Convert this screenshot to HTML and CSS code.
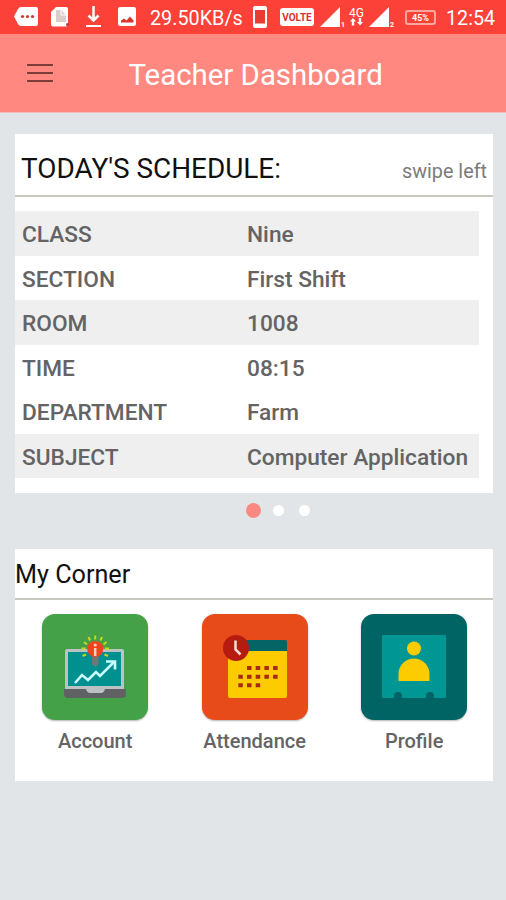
FILE: index.html
```html
<!DOCTYPE html>
<html lang="en">
<head>
  <meta charset="UTF-8">
  <meta name="viewport" content="width=device-width, initial-scale=1.0">
  <title>Teacher Dashboard</title>
  <link rel="stylesheet" href="styles.css">
</head>
<body>

<div class="status-bar">
  <svg class="icon-message" width="24" height="20" viewBox="0 0 24 20">
    <path d="M7 0h15a2 2 0 0 1 2 2v15a2 2 0 0 1-2 2H7Q5 19 4 17L0 9.500 4 2Q5 0 7 0z" fill="#fff"/>
    <g fill="#d8352b"><circle cx="8.500" cy="9.500" r="1.600"/><circle cx="13.500" cy="9.500" r="1.600"/><circle cx="18.500" cy="9.500" r="1.600"/></g>
  </svg>
  <svg class="icon-file" width="19" height="20" viewBox="0 0 19 20">
    <path d="M5 0h10a2 2 0 0 1 2 2v15.500a2 2 0 0 1-2 2H2a2 2 0 0 1-2-2V5z" fill="#fff"/>
    <path d="M5 3h5l5 5v7H5z" fill="#dccccb"/>
    <path d="M10 3v5h5" fill="none" stroke="#fff"/>
    <circle cx="16.500" cy="17.500" r="1.500" fill="#c8372f"/>
  </svg>
  <svg class="icon-download" width="17" height="22" viewBox="0 0 17 22">
    <path d="M8.500 0v14M3.500 9.500l5 5 5-5" fill="none" stroke="#fff" stroke-width="2.500"/>
    <path d="M1 20h15" stroke="#fff" stroke-width="2"/>
  </svg>
  <svg class="icon-image" width="19" height="20" viewBox="0 0 19 20">
    <rect width="18" height="19" rx="2" fill="#fff"/>
    <path d="M3 15.500v-2l3-2 2.500 2 3.500-4 3.500 4v2z" fill="#d8352b"/>
  </svg>
  <span class="network-speed">29.50KB/s</span>
  <svg class="icon-phone" width="14" height="22" viewBox="0 0 14 22">
    <rect width="14" height="22" rx="2" fill="#fff"/>
    <rect x="2" y="4" width="10" height="13.500" fill="#e83b31"/>
  </svg>
  <span class="volte">VOLTE</span>
  <svg class="icon-signal" width="20" height="20" viewBox="0 0 20 20"><path d="M20 0v20H0z" fill="#fff"/></svg>
  <span class="sim">1</span>
  <div class="data">
    <span>4G</span>
    <svg width="13" height="8" viewBox="0 0 13 8">
      <path d="M3 0l3 3.500H4.200V7.500H1.800V3.500H0zM10 7.500L7 4h1.800V0h2.400v4H13z" fill="#fff"/>
    </svg>
  </div>
  <svg class="icon-signal" width="20" height="20" viewBox="0 0 20 20"><path d="M20 0v20H0z" fill="#fff"/></svg>
  <span class="sim">2</span>
  <span class="battery">45%</span>
  <span class="clock">12:54</span>
</div>

<div class="header">
  <button class="menu-btn" aria-label="Menu"><span></span><span></span><span></span></button>
  <h1>Teacher Dashboard</h1>
</div>

<div class="card schedule">
  <div class="schedule-header">
    <h2>TODAY'S SCHEDULE:</h2>
    <span class="hint">swipe left</span>
  </div>
  <table>
    <tr class="shaded"><th>CLASS</th><td>Nine</td></tr>
    <tr><th>SECTION</th><td>First Shift</td></tr>
    <tr class="shaded"><th>ROOM</th><td>1008</td></tr>
    <tr><th>TIME</th><td>08:15</td></tr>
    <tr><th>DEPARTMENT</th><td>Farm</td></tr>
    <tr class="shaded"><th>SUBJECT</th><td>Computer Application</td></tr>
  </table>
</div>

<div class="dots">
  <span class="dot active"></span>
  <span class="dot"></span>
  <span class="dot"></span>
</div>

<div class="card corner">
  <h3>My Corner</h3>
  <div class="tiles">
    <div class="tile">
      <div class="tile-icon account">
        <svg width="106" height="106" viewBox="0 0 106 106">
          <rect x="23" y="35" width="59" height="43" rx="2" fill="#bcc2c4"/>
          <rect x="26" y="38" width="53" height="34" fill="#00908f"/>
          <path d="M22 75h62v5a4 4 0 0 1-4 4H26a4 4 0 0 1-4-4z" fill="#5f6162"/>
          <path d="M44 75h19q-1 4-4 4H48q-3 0-4-4z" fill="#bcc2c4"/>
          <path d="M33 69l7-8 6 5 8-8 4 4 14-14" fill="none" stroke="#c9fbff" stroke-width="2.600"/>
          <path d="M64 47.500h9v8" fill="none" stroke="#c9fbff" stroke-width="2.600"/>
          <path d="M50 42h6.500v7q0 3-3.200 3T50 49z" fill="#737576"/>
          <circle cx="53.200" cy="35" r="8" fill="#f4431c"/>
          <path d="M53.200 34v8" stroke="#fbcfc0" stroke-width="2.500"/>
          <circle cx="53.200" cy="31" r="1.600" fill="#fbcfc0"/>
          <path d="M53.200 21.500v4M46.500 23l1.500 3.500M60 23l-1.500 3.500M42 28l3 2.500M64.500 28l-3 2.500M39.500 34.500h4M67 34.500h-4M40.500 42l3.500-1.500M66 42l-3.500-1.500" stroke="#c2d91c" stroke-width="2"/>
        </svg>
      </div>
      <span>Account</span>
    </div>
    <div class="tile">
      <div class="tile-icon attendance">
        <svg width="106" height="106" viewBox="0 0 106 106">
          <path d="M26 36h59v46a2 2 0 0 1-2 2H28a2 2 0 0 1-2-2z" fill="#fccb00"/>
          <path d="M26 28a2 2 0 0 1 2-2h55a2 2 0 0 1 2 2v9H26z" fill="#046466"/>
          <circle cx="34" cy="34" r="13" fill="#b51b0e"/>
          <path d="M33.500 26.500v9l5 5" fill="none" stroke="#f6ded9" stroke-width="2.500"/>
          <path d="M45 54h31" stroke="#a82a13" stroke-width="4" stroke-dasharray="4.500 4.200"/>
          <path d="M36.300 62.700h40" stroke="#a82a13" stroke-width="4" stroke-dasharray="4.500 4.200"/>
          <path d="M36.300 71.300h22" stroke="#a82a13" stroke-width="4" stroke-dasharray="4.500 4.200"/>
        </svg>
      </div>
      <span>Attendance</span>
    </div>
    <div class="tile">
      <div class="tile-icon profile">
        <svg width="106" height="106" viewBox="0 0 106 106">
          <path d="M22 21h62a1 1 0 0 1 1 1v61a1 1 0 0 1-1 1H73v-2a4 4 0 0 0-8 0v2H41v-2a4 4 0 0 0-8 0v2H22a1 1 0 0 1-1-1V22a1 1 0 0 1 1-1z" fill="#009694"/>
          <circle cx="53" cy="34.500" r="7" fill="#fccb00"/>
          <path d="M37.500 67v-7a15.500 15.500 0 0 1 31 0v7z" fill="#fccb00"/>
        </svg>
      </div>
      <span>Profile</span>
    </div>
  </div>
</div>

</body>
</html>
```
FILE: styles.css
```css
* {
  box-sizing: border-box;
}

body {
  font-family: Roboto, sans-serif;
  background-color: #e1e5e8;
  margin: 0;
  min-height: 900px;
}

.status-bar {
  height: 34px;
  background-color: #fb4138;
  color: #fff;
  display: flex;
  align-items: center;
  padding-left: 14px;
  white-space: nowrap;
}

.status-bar > * {
  flex-shrink: 0;
}

.icon-file {
  margin-left: 13px;
}

.icon-download {
  margin-left: 15px;
}

.icon-image {
  margin-left: 16px;
}

.network-speed {
  width: 103px;
  margin-left: 13px;
  font-size: 19.8px;
  padding-top: 3px;
}

.volte {
  width: 34px;
  height: 18px;
  margin-left: 13px;
  border-radius: 3px;
  background-color: #fff;
  color: #d8352b;
  font-size: 10px;
  font-weight: bold;
  line-height: 19px;
  text-align: center;
}

.icon-signal {
  margin-left: 6px;
}

.sim {
  width: 6px;
  padding-left: 1px;
  font-size: 7px;
  font-weight: bold;
  align-self: flex-end;
  margin-bottom: 5px;
}

.data {
  width: 17px;
  display: flex;
  flex-direction: column;
  align-items: center;
  font-size: 12px;
  line-height: 10px;
  margin-left: 2px;
}

.data + .icon-signal {
  margin-left: 4px;
}

.battery {
  width: 31px;
  height: 15px;
  margin-left: 10px;
  border: 2px solid #fda59f;
  border-radius: 3px;
  font-size: 9px;
  font-weight: bold;
  line-height: 12px;
  text-align: center;
}

.clock {
  margin-left: 10px;
  padding-top: 3px;
  font-size: 19.7px;
}

.header {
  height: 79px;
  background-color: #ff8980;
  display: flex;
  align-items: center;
  padding-left: 27px;
  border-bottom: 1px solid #f0bfbd;
}

.menu-btn {
  width: 26px;
  padding: 0;
  border: none;
  background: none;
  display: flex;
  flex-direction: column;
  gap: 6px;
}

.menu-btn span {
  height: 2px;
  background-color: #7d3d3b;
}

h1 {
  margin: 3px 0 0 75.5px;
  color: #fff;
  font-size: 29.4px;
  font-weight: normal;
}

.card {
  margin: 0 13px 0 15px;
  background-color: #fff;
}

.schedule {
  height: 359px;
  margin-top: 21px;
}

.schedule-header {
  height: 63px;
  display: flex;
  justify-content: space-between;
  align-items: baseline;
  padding: 18px 6px 0;
  border-bottom: 2px solid #c9c9be;
}

h2 {
  margin: 0;
  color: #111;
  font-size: 27.9px;
  font-weight: normal;
}

.hint {
  color: #7b7b7b;
  font-size: 19.8px;
}

table {
  width: 464px;
  margin-top: 14px;
  border-collapse: collapse;
  table-layout: fixed;
}

th, td {
  height: 44.5px;
  padding: 4px 0 0 7px;
  color: #646464;
  font-size: 22.7px;
  font-weight: 500;
  text-align: left;
  line-height: 26px;
}

th {
  width: 225px;
}

.shaded {
  background-color: #efefef;
}

.dots {
  height: 56px;
  display: flex;
  align-items: flex-start;
  padding: 10px 0 0 246px;
}

.dot {
  width: 11px;
  height: 11px;
  margin: 2px 0 0 15px;
  border-radius: 50%;
  background-color: #fff;
}

.dot.active {
  width: 15px;
  height: 15px;
  margin: 0;
  background-color: #fb8881;
}

.dot.active + .dot {
  margin-left: 12px;
}

.corner {
  height: 232px;
}

h3 {
  height: 51px;
  margin: 0;
  padding-top: 11px;
  border-bottom: 2px solid #c9c9c2;
  color: #111;
  font-size: 25.2px;
  font-weight: normal;
}

.tiles {
  display: grid;
  grid-template-columns: repeat(3, 159.5px);
  padding: 14px 0 0 0.4px;
}

.tile {
  display: flex;
  flex-direction: column;
  align-items: center;
  color: #646464;
  font-size: 20px;
  font-weight: 500;
}

.tile-icon {
  width: 106px;
  height: 106px;
  margin-bottom: 9px;
  border-radius: 13px;
  box-shadow: 0 1px 2px rgba(0, 0, 0, 0.3);
}

.tile-icon svg {
  display: block;
}

.account {
  background-color: #44a148;
}

.attendance {
  background-color: #e74b19;
}

.profile {
  background-color: #006465;
}
```
